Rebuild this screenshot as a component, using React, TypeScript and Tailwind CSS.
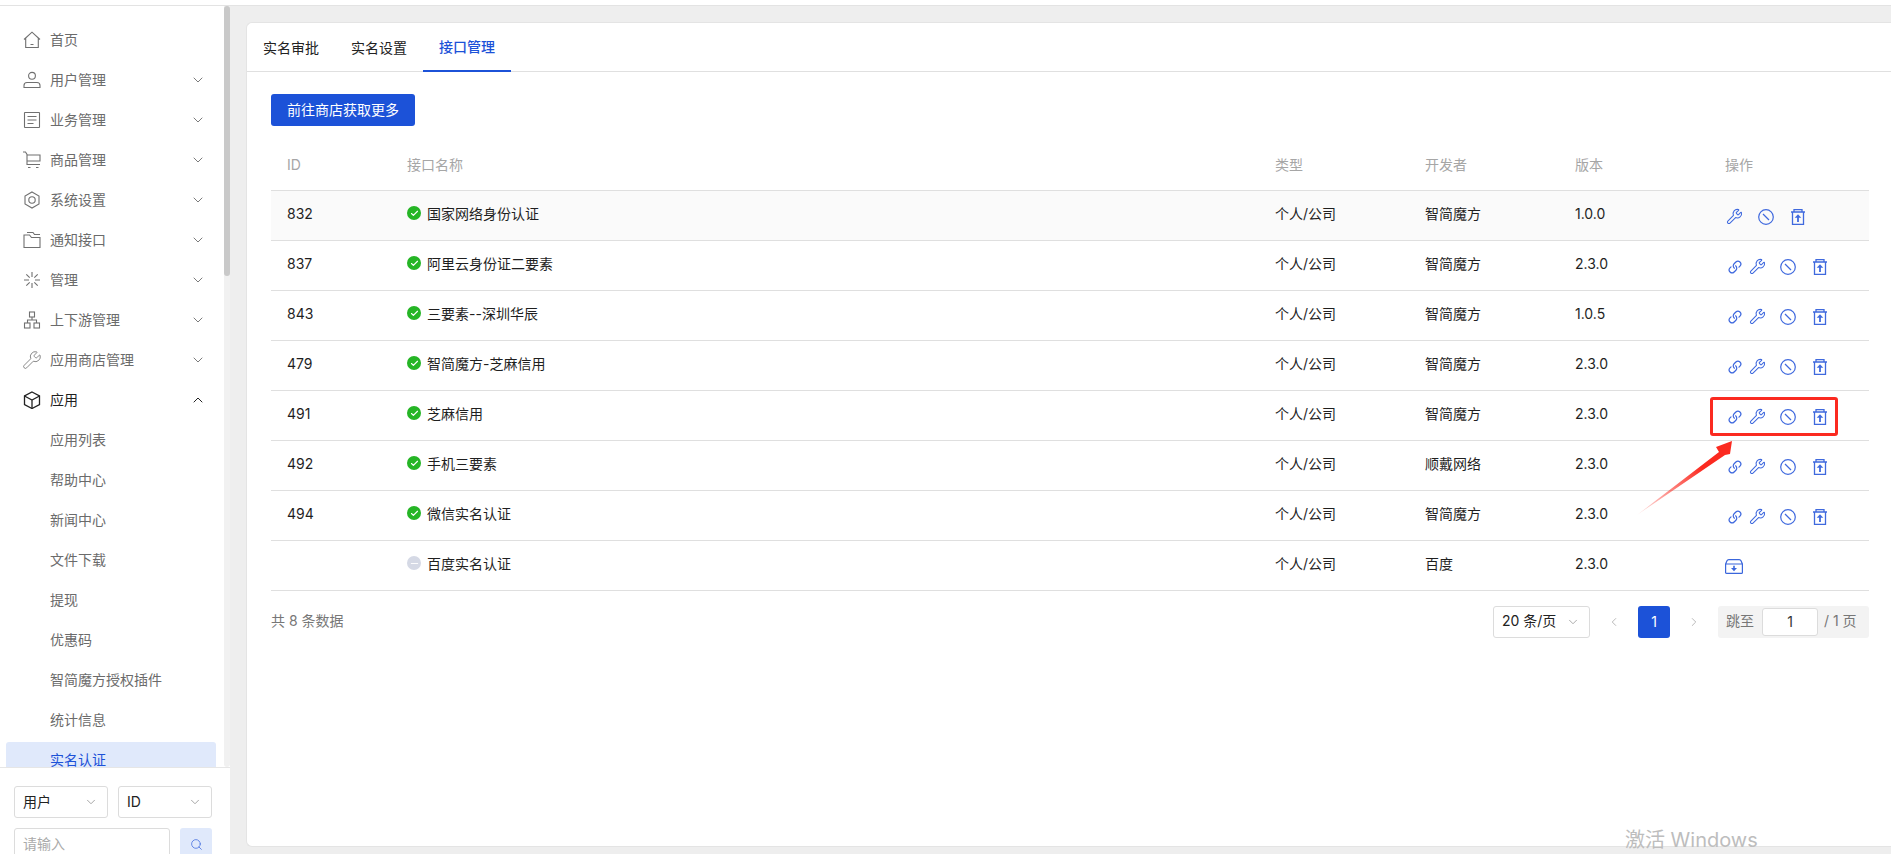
import React from "react";
import { Wrench, Link as LinkIcon, ChevronDown, ChevronUp, ChevronLeft, ChevronRight, Search, Check, Minus } from "lucide-react";

const S = ({ children }: { children: React.ReactNode }) => (
  <svg width="18" height="18" viewBox="0 0 18 18" fill="none" stroke="currentColor" strokeWidth="1.1" className="shrink-0 text-[#707070]">{children}</svg>
);

const icons: Record<string, React.ReactNode> = {
  home: <S><path d="M1 8.500 9 1.200l8 7.300M2.700 7.300V16.500h12.600V7.300M7.500 13.500h3" /></S>,
  user: <S><circle cx="9" cy="4.800" r="3.400" /><path d="M1 16.500v-2c0-2 1.500-3 3-3h10c1.500 0 3 1 3 3v2z" /></S>,
  doc: <S><rect x="1.500" y="1.500" width="15" height="15" rx="0.500" /><path d="M4.500 5.500h9M4.500 9h9M4.500 12.500h6" /></S>,
  cart: <S><path d="M0 1h2.500l1.500 2.500v10h13M4 4h13v6H4" /><path d="M5 16.500h2.500M13 16.500h2.500" /></S>,
  gear: <S><path d="M9 1 16 5v8l-7 4-7-4V5z" /><circle cx="9" cy="9" r="3.200" /></S>,
  folder: <S><path d="M1 4V16.500h16V6.500H8.500L6.500 4H1z" /><path d="M4 1.500h6l1.500 2h5.500" /></S>,
  burst: <S><path d="M9 1v5M9 12v5M1 9h5M12 9h5M3.300 3.300l3.400 3.400M11.300 11.300l3.400 3.400M14.700 3.300l-3.400 3.400M6.700 11.300l-3.400 3.400" /></S>,
  tree: <S><rect x="6.500" y="1" width="5" height="5" /><rect x="1.500" y="12" width="5.500" height="5" /><rect x="11" y="12" width="5.500" height="5" /><path d="M9 6v3M4.500 12V9h9v3" /></S>,
  wrench: <Wrench size={20} strokeWidth={1} className="shrink-0 -ml-[1px] -my-[1px] text-[#707070]" />,
  box: <svg width="18" height="18" viewBox="0 0 18 18" fill="none" stroke="#222222" strokeWidth="1.3" className="shrink-0"><path d="M9 1 16.500 5v8.500L9 17.500 1.500 13.500V5z" /><path d="M1.500 5 9 9l7.500-4M9 9v8.500" /></svg>,
};

type Item = { label: string; icon?: string; arrow?: "down" | "up"; dark?: boolean; active?: boolean };
const menu: Item[] = [
  { label: "首页", icon: "home" },
  { label: "用户管理", icon: "user", arrow: "down" },
  { label: "业务管理", icon: "doc", arrow: "down" },
  { label: "商品管理", icon: "cart", arrow: "down" },
  { label: "系统设置", icon: "gear", arrow: "down" },
  { label: "通知接口", icon: "folder", arrow: "down" },
  { label: "管理", icon: "burst", arrow: "down" },
  { label: "上下游管理", icon: "tree", arrow: "down" },
  { label: "应用商店管理", icon: "wrench", arrow: "down" },
  { label: "应用", icon: "box", arrow: "up", dark: true },
  { label: "应用列表" },
  { label: "帮助中心" },
  { label: "新闻中心" },
  { label: "文件下载" },
  { label: "提现" },
  { label: "优惠码" },
  { label: "智简魔方授权插件" },
  { label: "统计信息" },
  { label: "实名认证", active: true },
];

const rows = [
  { id: "832", name: "国家网络身份认证", dev: "智简魔方", ver: "1.0.0", ops: "noLink", hover: true },
  { id: "837", name: "阿里云身份证二要素", dev: "智简魔方", ver: "2.3.0", ops: "all" },
  { id: "843", name: "三要素--深圳华辰", dev: "智简魔方", ver: "1.0.5", ops: "all" },
  { id: "479", name: "智简魔方-芝麻信用", dev: "智简魔方", ver: "2.3.0", ops: "all" },
  { id: "491", name: "芝麻信用", dev: "智简魔方", ver: "2.3.0", ops: "all" },
  { id: "492", name: "手机三要素", dev: "顺戴网络", ver: "2.3.0", ops: "all" },
  { id: "494", name: "微信实名认证", dev: "智简魔方", ver: "2.3.0", ops: "all" },
  { id: "", name: "百度实名认证", dev: "百度", ver: "2.3.0", ops: "install", off: true },
];

const BanIcon = () => (
  <svg width="16" height="16" viewBox="0 0 16 16" fill="none" stroke="currentColor" strokeWidth="1.2" className="shrink-0">
    <circle cx="8" cy="8" r="7.300" /><path d="M5 5l6 6" strokeWidth="1.300" />
  </svg>
);
const TrashIcon = () => (
  <svg width="14" height="16" viewBox="0 0 14 16" fill="none" stroke="currentColor" strokeWidth="1.300" className="shrink-0">
    <path d="M0 3h14M3 3V0.700h8V3M1.500 3V15.300h11V3" />
    <path d="M7 13V7" strokeWidth="1.800" /><path d="M3.700 8.800 7 5.200l3.300 3.600z" fill="currentColor" stroke="none" />
  </svg>
);
const InstallIcon = () => (
  <svg width="18" height="15" viewBox="0 0 18 15" fill="none" stroke="#3a66dc" strokeWidth="1.200" className="shrink-0">
    <path d="M0.600 5 2 1.800Q2.500 0.600 3.800 0.600h10.400Q15.500 0.600 16 1.800L17.400 5v8.400q0 1-1 1H1.600q-1 0-1-1zM0.600 5h16.800" />
    <path d="M9 6.800v3" strokeWidth="1.600" /><path d="M6 9h6l-3 3.200z" fill="#3a66dc" stroke="none" />
  </svg>
);

function Ops({ kind }: { kind: string }) {
  if (kind === "install") return <div className="flex items-center pt-[2px]"><InstallIcon /></div>;
  return (
    <div className="flex items-center text-[#3f69de] pt-[3px]">
      {kind === "all" ? (
        <>
          <LinkIcon size={14} strokeWidth={2.1} className="ml-[3px] mr-[7px] shrink-0 -scale-y-100 rotate-90" />
          <Wrench size={17} strokeWidth={1.5} className="mr-[14px] shrink-0" />
        </>
      ) : (
        <Wrench size={17} strokeWidth={1.5} className="ml-[1px] mr-[15px] shrink-0" />
      )}
      <BanIcon />
      <span className="w-[17px]" />
      <TrashIcon />
    </div>
  );
}

function MiniSelect({ label, w }: { label: string; w: string }) {
  return (
    <div className={`${w} h-8 flex items-center justify-between border border-[#dcdcdc] rounded-[3px] pl-2 pr-[9px] text-[14px] text-[#222]`}>
      <span className="pb-[2px]">{label}</span>
      <ChevronDown size={14} strokeWidth={1.5} className="text-[#999]" />
    </div>
  );
}

export default function App() {
  return (
    <div className="h-[854px] overflow-hidden flex flex-col bg-[#eeeeee] text-[14px]" style={{ fontFamily: '"Inter","Noto Sans CJK SC","Liberation Sans",sans-serif' }}>
      <div className="h-[6px] bg-white border-b border-[#e3e3e3] shrink-0" />
      <div className="flex-1 flex min-h-0">
        <aside className="w-[230px] shrink-0 bg-white flex flex-col">
          <div className="h-[761px] flex shrink-0">
            <nav className="w-[224px] overflow-hidden pt-4 pl-[6px] pr-2 flex flex-col gap-1">
              {menu.map((m) => (
                <div
                  key={m.label}
                  className={`h-9 shrink-0 flex items-center rounded-[3px] pl-[17px] pr-[10px] ${m.active ? "bg-[#e0e9fb] text-[#1c52d8]" : m.dark ? "text-[#1f1f1f]" : "text-[#6b6b6b]"}`}
                >
                  <span className="w-[27px] shrink-0 flex">{m.icon ? icons[m.icon] : null}</span>
                  <span className="flex-1 whitespace-nowrap pb-[2px]">{m.label}</span>
                  {m.arrow === "down" && <ChevronDown size={16} strokeWidth={1.3} className="text-[#666]" />}
                  {m.arrow === "up" && <ChevronUp size={16} strokeWidth={1.5} className="text-[#222]" />}
                </div>
              ))}
            </nav>
            <div className="w-[6px] bg-[#f1f1f1] rounded-b-[3px]">
              <div className="h-[270px] bg-[#c9c9c9] rounded-[3px]" />
            </div>
          </div>
          <div className="flex-1 border-t border-[#e6e6e6] pt-[18px] pl-[14px] pr-[18px]">
            <div className="flex gap-[10px]">
              <MiniSelect label="用户" w="w-[94px]" />
              <MiniSelect label="ID" w="w-[94px]" />
            </div>
            <div className="flex gap-[10px] mt-[10px]">
              <div className="w-[156px] h-8 border border-[#dcdcdc] rounded-[3px] pl-2 pb-[2px] flex items-center text-[#aaaaaa]">请输入</div>
              <div className="w-8 h-8 bg-[#e0e9fb] rounded-[3px] flex items-center justify-center text-[#4a72e0]">
                <Search size={13} strokeWidth={1.5} />
              </div>
            </div>
          </div>
        </aside>

        <main className="flex-1 min-w-0 pl-4 pt-4 pb-[7px]">
          <div className="h-full bg-white rounded-tl-[6px] rounded-bl-[6px] border border-r-0 border-[#e4e4e4]">
            <div className="h-[49px] flex border-b border-[#e0e0e0] text-[#222]">
              {["实名审批", "实名设置", "接口管理"].map((t, i) => (
                <div key={t} className={`w-[88px] pb-px flex items-center justify-center -mb-px ${i === 2 ? "text-[#1c52d8] border-b-2 border-[#1c52d8] font-medium" : ""}`}>
                  {t}
                </div>
              ))}
            </div>
            <div className="pl-6 pr-[21px] pt-[22px]">
              <button className="h-8 px-4 rounded-[3px] bg-[#1c52d8] text-white"><span className="relative -top-px">前往商店获取更多</span></button>
              <table className="mt-[14px] w-[1598px] table-fixed border-collapse">
                <colgroup>
                  <col className="w-[120px]" />
                  <col className="w-[868px]" />
                  <col className="w-[150px]" />
                  <col className="w-[150px]" />
                  <col className="w-[150px]" />
                  <col className="w-[160px]" />
                </colgroup>
                <thead>
                  <tr className="h-[50px] text-[#a6a6a6] text-left">
                    {["ID", "接口名称", "类型", "开发者", "版本", "操作"].map((h) => (
                      <th key={h} className="font-normal pl-4">{h}</th>
                    ))}
                  </tr>
                </thead>
                <tbody className="text-[#1f1f1f]">
                  {rows.map((r) => (
                    <tr key={r.name} className={`h-[50px] border-t border-b border-[#dfdfdf] ${r.hover ? "bg-[#fafafa]" : ""}`}>
                      <td className="pl-4 pb-1">{r.id}</td>
                      <td className="pl-4 pb-1">
                        <div className="flex items-center gap-[6px]">
                          {r.off ? (
                            <span className="w-[14px] h-[14px] rounded-full bg-[#d5d9e5] flex items-center justify-center text-white"><Minus size={11} strokeWidth={2} /></span>
                          ) : (
                            <span className="w-[14px] h-[14px] rounded-full bg-[#25b525] flex items-center justify-center text-white"><Check size={9} strokeWidth={3} /></span>
                          )}
                          <span>{r.name}</span>
                        </div>
                      </td>
                      <td className="pl-4 pb-[3px]">个人/公司</td>
                      <td className="pl-4 pb-[3px]">{r.dev}</td>
                      <td className="pl-4 pb-[3px]">{r.ver}</td>
                      <td className="pl-4"><Ops kind={r.ops} /></td>
                    </tr>
                  ))}
                </tbody>
              </table>
              <div className="w-[1598px] mt-[15px] flex items-center justify-between">
                <span className="text-[#777] pb-[2px]">共 8 条数据</span>
                <div className="flex items-center">
                  <div className="w-[97px] h-8 border border-[#dcdcdc] rounded-[3px] pl-2 pr-[9px] flex items-center justify-between text-[#222]">
                    <span className="pb-[2px]">20 条/页</span>
                    <ChevronDown size={14} strokeWidth={1.4} className="text-[#999]" />
                  </div>
                  <ChevronLeft size={14} strokeWidth={1.4} className="ml-[17px] mr-[17px] text-[#aaa]" />
                  <div className="w-8 h-8 rounded-[3px] bg-[#1c52d8] text-white flex items-center justify-center">1</div>
                  <ChevronRight size={14} strokeWidth={1.4} className="ml-[17px] mr-[17px] text-[#aaa]" />
                  <div className="w-[151px] h-8 rounded-[3px] bg-[#f3f3f3] flex items-center pl-2 text-[#777]">
                    <span className="pb-[2px]">跳至</span>
                    <div className="w-[56px] h-[28px] ml-2 mr-[6px] bg-white border border-[#dcdcdc] rounded-[3px] flex items-center justify-center text-[#333]">1</div>
                    <span className="pb-[2px]">/ 1 页</span>
                  </div>
                </div>
              </div>
            </div>
          </div>
        </main>
      </div>

      {/* annotation over the page */}
      <div className="absolute left-[1710px] top-[397px] w-[128px] h-[39px] border-[3px] border-[#fb2a20] rounded-[3px]" />
      <svg className="absolute left-0 top-0 pointer-events-none" width="1891" height="854">
        <defs>
          <linearGradient id="tail" gradientUnits="userSpaceOnUse" x1="1637" y1="515" x2="1700" y2="465">
            <stop offset="0" stopColor="#fb2a20" stopOpacity="0.1" />
            <stop offset="1" stopColor="#fb2a20" />
          </linearGradient>
        </defs>
        <polygon points="1637,515 1719,452 1716,447 1732,441 1730,454 1725,455" fill="url(#tail)" />
      </svg>
      <div className="absolute left-[1625px] top-[825px] text-[20px] text-[#bdbdbd] whitespace-nowrap">激活 Windows</div>
    </div>
  );
}
